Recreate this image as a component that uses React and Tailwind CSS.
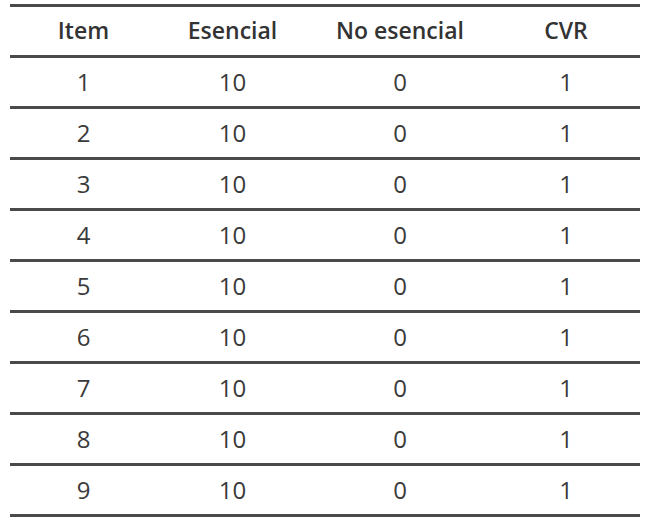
import React from "react";

const rows = [1, 2, 3, 4, 5, 6, 7, 8, 9];
const cols = "grid grid-cols-[147px_151px_184px_148px]";

export default function App() {
  return (
    <div className="w-[650px] h-[527px] bg-white pt-[4px] pl-[10px]" style={{ fontFamily: '"Open Sans", "Liberation Sans", Arial, sans-serif' }}>
      <div className="w-[630px] border-t-[3px] border-[#4a4a4a]">
        <div className={`${cols} h-[51px] items-center border-b-[3px] border-[#4a4a4a] text-[23px] font-semibold text-[#333] leading-none`}>
          <div className="text-center pb-[1px]">Item</div>
          <div className="text-center pb-[1px]">Esencial</div>
          <div className="text-center pb-[1px]">No esencial</div>
          <div className="text-center pb-[1px]">CVR</div>
        </div>
        {rows.map((r) => (
          <div key={r} className={`${cols} h-[51px] items-center border-b-[3px] border-[#4a4a4a] text-[24px] font-normal text-[#3a3a3a] leading-none`}>
            <div className="text-center">{r}</div>
            <div className="text-center">10</div>
            <div className="text-center">0</div>
            <div className="text-center">1</div>
          </div>
        ))}
      </div>
    </div>
  );
}
